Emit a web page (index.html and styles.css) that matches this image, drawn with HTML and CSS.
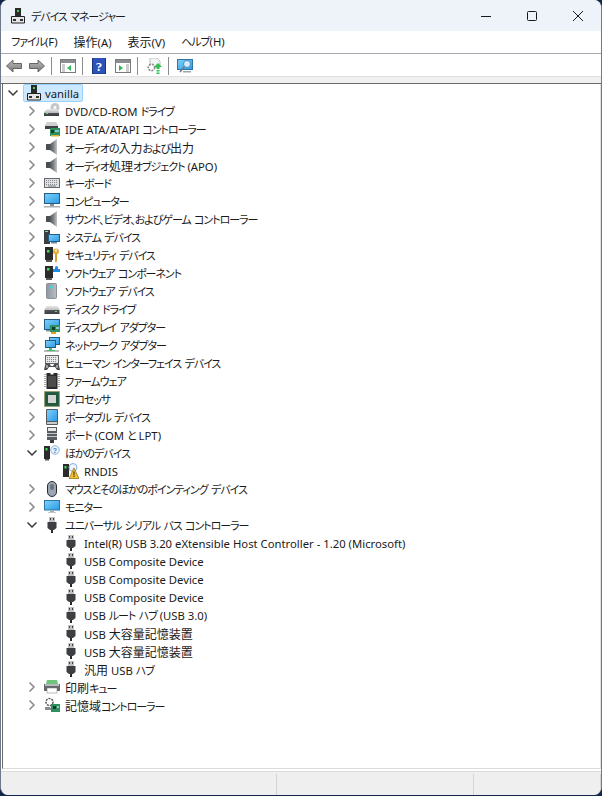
FILE: index.html
```html
<!DOCTYPE html>
<html lang="ja">
<head>
<meta charset="utf-8">
<title>デバイス マネージャー</title>
<link rel="stylesheet" href="styles.css">
</head>
<body>
<svg class="defs" width="0" height="0" aria-hidden="true">
  <defs>
    <linearGradient id="g-scr" x1="0" y1="0" x2="1" y2="1"><stop offset="0" stop-color="#7fd0fa"/><stop offset="1" stop-color="#2a9be6"/></linearGradient>
    <linearGradient id="g-spk" x1="0" y1="0" x2="1" y2="0"><stop offset="0" stop-color="#4f5458"/><stop offset=".5" stop-color="#7d8286"/><stop offset="1" stop-color="#c4c6c8"/></linearGradient>
    <linearGradient id="g-drv" x1="0" y1="0" x2="0" y2="1"><stop offset="0" stop-color="#e8e8e8"/><stop offset=".5" stop-color="#bdbdbd"/><stop offset=".55" stop-color="#50545a"/><stop offset="1" stop-color="#3a3d42"/></linearGradient>
    <linearGradient id="g-twr" x1="0" y1="0" x2="1" y2="0"><stop offset="0" stop-color="#8f969e"/><stop offset="1" stop-color="#b9bec4"/></linearGradient>
    <linearGradient id="g-arr" x1="0" y1="0" x2="0" y2="1"><stop offset="0" stop-color="#bcbcbc"/><stop offset="1" stop-color="#787878"/></linearGradient>

    <symbol id="i-pc" viewBox="0 0 16 16"><rect x="5" y="0" width="6" height="8" fill="#2b2b2b"/><rect x="7" y="2" width="2" height="2" fill="#3fd25a"/><path d="M1.500 8.500h13v6.500h-13z" fill="#e6e6e6" stroke="#222"/><rect x="3" y="11" width="3" height="2" fill="#333"/><rect x="10" y="11" width="3" height="2" fill="#333"/></symbol>

    <symbol id="i-dvd" viewBox="0 0 16 16"><circle cx="11" cy="4.500" r="4.500" fill="#c4c7ca"/><circle cx="11" cy="4.500" r="1.400" fill="#fff"/><path d="M3 6h10l2 3v4H0v-4z" fill="url(#g-drv)"/><rect x="2" y="10" width="2" height="1" fill="#5fe06a"/></symbol>

    <symbol id="i-ide" viewBox="0 0 16 16"><path d="M3 1h9l2 3v3H1V4z" fill="#cfcfcf"/><rect x="1" y="5" width="13" height="3" fill="#3e4146"/><rect x="6" y="7" width="10" height="8" fill="#2f8f5f"/><rect x="7" y="9" width="3" height="3" fill="#123e2a"/><rect x="11" y="9" width="4" height="2" fill="#7cc"/><path d="M7 14h8v1.500H7z" fill="#d8b23a"/></symbol>

    <symbol id="i-audio" viewBox="0 0 16 16"><rect x="2" y="5" width="4" height="6" fill="#4a4e52"/><path d="M6 5 13 0v16L6 11z" fill="url(#g-spk)"/></symbol>

    <symbol id="i-kbd" viewBox="0 0 16 16"><rect x=".5" y="3.500" width="15" height="9" fill="#dfe1e4" stroke="#666a6f"/><path d="M2 5.500h12M2 7.500h12M2 9.500h12" stroke="#888d92" stroke-dasharray="1 1"/><path d="M4 11h8" stroke="#7a7f84"/></symbol>

    <symbol id="i-mon" viewBox="0 0 16 16"><rect x=".5" y=".5" width="15" height="10" fill="url(#g-scr)" stroke="#245c86"/><rect x="6" y="11" width="4" height="2" fill="#8a9299"/><rect y="13" width="16" height="1.500" fill="#aab0b5"/></symbol>

    <symbol id="i-sys" viewBox="0 0 16 16"><rect x="0" y="1" width="6" height="14" fill="#3c3f42"/><rect x="1" y="2" width="3" height="1" fill="#7fe08a"/><rect x="4.500" y="5.500" width="11" height="7" fill="url(#g-scr)" stroke="#245c86"/><rect x="7" y="13" width="6" height="1.500" fill="#6d8aa0"/></symbol>

    <symbol id="i-sec" viewBox="0 0 16 16"><rect x="1" y="0" width="8" height="13" fill="#2b2b2b"/><rect x="3" y="3" width="2.500" height="2.500" fill="#43dc5c"/><path d="M2 13h6v2H2z" fill="#555"/><circle cx="12" cy="4.500" r="3" fill="#e0b040"/><circle cx="12" cy="3.500" r=".9" fill="#fff"/><path d="M11 7h2v7l-1 1.500-1-1z" fill="#d2a030"/></symbol>

    <symbol id="i-comp" viewBox="0 0 16 16"><rect x="1" y="1" width="8" height="12" fill="#2b2b2b"/><rect x="3" y="3" width="2.500" height="2.500" fill="#43dc5c"/><rect x="2" y="13" width="6" height="2" fill="#555"/><path d="M9 4h2V2.500a1.500 1.500 0 0 1 3 0V4h2v3H9z" fill="#1f8ee0"/></symbol>

    <symbol id="i-swdev" viewBox="0 0 16 16"><rect x="2.500" y=".5" width="10" height="15" rx="1" fill="url(#g-twr)" stroke="#8a9098"/><rect x="6" y="3" width="2.500" height="2.500" fill="#35d8e8"/></symbol>

    <symbol id="i-disk" viewBox="0 0 16 16"><path d="M3 5h10l2.500 3v5H.5V8z" fill="url(#g-drv)"/><rect x="11" y="10" width="2" height="1" fill="#6fe06a"/></symbol>

    <symbol id="i-disp" viewBox="0 0 16 16"><rect x=".5" y=".5" width="15" height="10" fill="url(#g-scr)" stroke="#245c86"/><rect x="2" y="11" width="6" height="1.500" fill="#8a9299"/><rect x="6" y="6" width="10" height="7" fill="#2f8f5f"/><rect x="8" y="8" width="3" height="3" fill="#123e2a"/><rect x="12" y="8" width="3" height="2" fill="#8cd"/><rect x="7" y="13" width="5" height="2" fill="#e0a020"/></symbol>

    <symbol id="i-net" viewBox="0 0 16 16"><rect x="5.500" y=".5" width="10" height="7" fill="url(#g-scr)" stroke="#245c86"/><rect x="1.500" y="3.500" width="10" height="7" fill="url(#g-scr)" stroke="#245c86"/><rect x="5" y="11" width="3" height="2" fill="#45c060"/><rect x="0" y="13" width="15" height="2" fill="#b8bcc0"/><rect x="3" y="13" width="8" height="1" fill="#45c060"/></symbol>

    <symbol id="i-hid" viewBox="0 0 16 16"><rect x="1.500" y=".5" width="13" height="8" fill="#e6e8ea" stroke="#666"/><path d="M3 2.500h10M3 4.500h10M3 6.500h10" stroke="#888" stroke-dasharray="1 1"/><path d="M0 15 1.500 8.500h4L7 11h2l1.500-2.500h4L16 15h-3l-2-3H5l-2 3z" fill="#4a4d52"/><rect x="2" y="10" width="2" height="3" fill="#9aa0a6"/><rect x="12" y="10" width="2" height="3" fill="#9aa0a6"/></symbol>

    <symbol id="i-fw" viewBox="0 0 16 16"><path d="M2.500 0h4v1.500h3V0h4v16h-11z" fill="#2a2a2a"/><rect x="4" y="3" width="8" height="11" fill="#4c4c4c"/><path d="M1 1v14M15 1v14" stroke="#555" stroke-dasharray="1 1"/></symbol>

    <symbol id="i-cpu" viewBox="0 0 16 16"><rect x=".5" y=".5" width="15" height="15" fill="#2c6a4c" stroke="#9c8a40" stroke-dasharray="1 1"/><rect x="1.500" y="1.500" width="13" height="13" fill="#23583e"/><rect x="4" y="4" width="8" height="8" fill="#d4d6d4"/></symbol>

    <symbol id="i-port2" viewBox="0 0 16 16"><rect x="3" y="0" width="10" height="13" fill="#585b60"/><rect x="4" y="1" width="8" height="3" fill="#e8e8e8"/><path d="M3 6.500h10M3 9.500h10" stroke="#c4c6c8"/><rect x="6" y="13" width="4" height="3" fill="#3a3c40"/></symbol>

    <symbol id="i-portable" viewBox="0 0 16 16"><rect x="2" y="0" width="12" height="16" rx="1" fill="#55585c"/><rect x="3" y="1" width="10" height="11" fill="url(#g-scr)"/><rect x="3" y="13" width="10" height="2" fill="#c8cbce"/></symbol>

    <symbol id="i-other" viewBox="0 0 16 16"><rect x="0" y="1" width="6" height="13" fill="#2b2b2b"/><rect x="1.500" y="3" width="2" height="2.500" fill="#43dc5c"/><rect x="1" y="14" width="4" height="1.500" fill="#555"/><circle cx="11" cy="5" r="4.200" fill="#eef4fb" stroke="#8ab4dc"/><text class="qm" x="11" y="7.500" text-anchor="middle">?</text></symbol>

    <symbol id="i-rndis" viewBox="0 0 16 16"><rect x="0" y="1" width="6" height="13" fill="#2b2b2b"/><rect x="1.500" y="3" width="2" height="2.500" fill="#43dc5c"/><circle cx="10" cy="4.500" r="4" fill="#eef4fb" stroke="#8ab4dc"/><path d="M11 5 16 15.500H6z" fill="#f2c230" stroke="#8a6a10" stroke-width=".7"/><rect x="10.500" y="8.500" width="1" height="4" fill="#222"/><rect x="10.500" y="13" width="1" height="1" fill="#222"/></symbol>

    <symbol id="i-mouse" viewBox="0 0 16 16"><rect x="3.500" y=".5" width="9" height="15" rx="4.500" fill="#9aa6b4" stroke="#2a2c30"/><rect x="6" y="3" width="4" height="6" rx="2" fill="#6a7480"/></symbol>

    <symbol id="i-mon2" viewBox="0 0 16 16"><rect x=".5" y="1.500" width="15" height="9.500" fill="url(#g-scr)" stroke="#2a76a8"/><rect x="6" y="11.500" width="4" height="1.500" fill="#a8b0b6"/><rect x="4" y="13" width="8" height="1" fill="#c4c8cc"/></symbol>

    <symbol id="i-usb" viewBox="0 0 16 16"><rect x="5" y="0" width="6" height="5" fill="#c0c0c0"/><rect x="6" y="1" width="1" height="2" fill="#444"/><rect x="9" y="1" width="1" height="2" fill="#444"/><path d="M3.500 5h9v6l-2.500 2H6l-2.500-2z" fill="#3d3f42"/><rect x="7" y="13" width="2" height="3" fill="#2a2a2a"/></symbol>

    <symbol id="i-prn" viewBox="0 0 16 16"><path d="M3 1h10l1 4H2z" fill="#6ec47a"/><path d="M0 5h16v7H0z" fill="#65686c"/><path d="M1 5h14v2H1z" fill="#b8babc"/><rect x="3" y="9" width="10" height="5" fill="#fff" stroke="#777" stroke-width=".5"/></symbol>

    <symbol id="i-stor" viewBox="0 0 16 16"><circle cx="5.500" cy="5" r="3.500" fill="#fff" stroke="#555" stroke-width="1.500" stroke-dasharray="2 1"/><path d="M1 10h5l2 3H1z" fill="#8a8d90"/><rect x="7" y="7" width="9" height="8" fill="#2f8f5f"/><rect x="9" y="9" width="3" height="3" fill="#123e2a"/><rect x="13" y="9" width="2" height="2" fill="#8cd"/></symbol>

    <symbol id="i-right" viewBox="0 0 10 10"><path d="M2.500 .5 7 5 2.500 9.500" fill="none" stroke="#8a8a8a" stroke-width="1.500"/></symbol>
    <symbol id="i-down" viewBox="0 0 10 10"><path d="M.5 2.500 5 7l4.500-4.500" fill="none" stroke="#3a3a3a" stroke-width="1.500"/></symbol>
  </defs>
</svg>

<div class="window">
  <header class="titlebar">
    <svg class="ico title-ico"><use href="#i-pc"/></svg>
    <span class="title"><span class="ja">デバイス マネージャー</span></span>
    <div class="controls">
      <svg class="ctl" viewBox="0 0 12 12"><path d="M1 6.500h10" stroke="#1a1a1a" fill="none"/></svg>
      <svg class="ctl" viewBox="0 0 12 12"><rect x="1.500" y="1.500" width="9" height="9" rx="1" fill="none" stroke="#1a1a1a"/></svg>
      <svg class="ctl" viewBox="0 0 12 12"><path d="M1 1l10 10M11 1 1 11" stroke="#1a1a1a" fill="none"/></svg>
    </div>
  </header>

  <nav class="menubar">
    <span><span class="ja">ファイル</span>(F)</span><span><span class="kj">操作</span>(A)</span><span><span class="kj">表示</span>(V)</span><span><span class="ja">ヘルプ</span>(H)</span>
  </nav>

  <div class="toolbar">
    <svg class="tb" viewBox="0 0 16 16"><path d="M.5 8 7 2v3.500h8.500v5H7V14z" fill="url(#g-arr)" stroke="#666"/></svg>
    <svg class="tb tb-fwd" viewBox="0 0 16 16"><path d="M15.500 8 9 2v3.500H.5v5H9V14z" fill="url(#g-arr)" stroke="#666"/></svg>
    <i class="sep"></i>
    <svg class="tb" viewBox="0 0 16 16"><rect x=".5" y="1.500" width="15" height="13" fill="#fff" stroke="#7a7a7a"/><rect x="1" y="2" width="14" height="3" fill="#8a8e92"/><path d="M2 7h3M2 9h3M2 11h3M2 13h3" stroke="#9a9a9a"/><path d="M11 7v6L7 10z" fill="#32b85a"/></svg>
    <i class="sep"></i>
    <svg class="tb" viewBox="0 0 16 16"><rect x="1.500" y="-.5" width="13" height="16.500" fill="#2c53b8" stroke="#1c3580"/><text class="help-q" x="8" y="13" text-anchor="middle">?</text></svg>
    <svg class="tb tb-next" viewBox="0 0 16 16"><rect x=".5" y="1.500" width="15" height="13" fill="#fff" stroke="#7a7a7a"/><rect x="1" y="2" width="14" height="3" fill="#8a8e92"/><path d="M11 7h3M11 9h3M11 11h3M11 13h3" stroke="#9a9a9a"/><path d="M4 7v6l4-3z" fill="#32b85a"/></svg>
    <i class="sep"></i>
    <svg class="tb" viewBox="0 0 16 16"><path d="M4 0h7l3 3v6H4z" fill="#f4f4f4" stroke="#c0c0c0"/><circle cx="5.500" cy="9.500" r="3.200" fill="#fff" stroke="#8a8a8a" stroke-width="1.600" stroke-dasharray="2 1"/><path d="M12 5l4 4h-2.500v2h-3V9H8z" fill="#2fc04f"/><rect x="10.500" y="12" width="3" height="1.500" fill="#2fc04f"/><rect x="10.500" y="14.500" width="3" height="1.500" fill="#2fc04f"/></svg>
    <i class="sep"></i>
    <svg class="tb" viewBox="0 0 16 16"><rect x=".5" y="1.500" width="15" height="10" fill="url(#g-scr)" stroke="#2a76a8"/><circle cx="10" cy="6" r="3.500" fill="#cfeeff" stroke="#4e8fb8"/><path d="M7.500 8.500 3 14" stroke="#6a7a86" stroke-width="1.500"/><rect x="6" y="13" width="8" height="1.500" fill="#9aa6b0"/></svg>
  </div>

  <div class="strip"></div>

  <main class="tree">
    <div class="row lv0"><svg class="tw"><use href="#i-down"/></svg><span class="root"><svg class="ico"><use href="#i-pc"/></svg><b class="lbl">vanilla</b></span></div>
    <div class="row lv1"><svg class="tw"><use href="#i-right"/></svg><svg class="ico"><use href="#i-dvd"/></svg><span>DVD/CD-ROM <span class="ja">ドライブ</span></span></div>
    <div class="row lv1"><svg class="tw"><use href="#i-right"/></svg><svg class="ico"><use href="#i-ide"/></svg><span>IDE ATA/ATAPI <span class="ja">コントローラー</span></span></div>
    <div class="row lv1"><svg class="tw"><use href="#i-right"/></svg><svg class="ico"><use href="#i-audio"/></svg><span><span class="ja">オーディオの</span><span class="kj">入力</span><span class="ja">および</span><span class="kj">出力</span></span></div>
    <div class="row lv1"><svg class="tw"><use href="#i-right"/></svg><svg class="ico"><use href="#i-audio"/></svg><span><span class="ja">オーディオ</span><span class="kj">処理</span><span class="ja">オブジェクト</span> (APO)</span></div>
    <div class="row lv1"><svg class="tw"><use href="#i-right"/></svg><svg class="ico"><use href="#i-kbd"/></svg><span class="ja">キーボード</span></div>
    <div class="row lv1"><svg class="tw"><use href="#i-right"/></svg><svg class="ico"><use href="#i-mon"/></svg><span class="ja">コンピューター</span></div>
    <div class="row lv1"><svg class="tw"><use href="#i-right"/></svg><svg class="ico"><use href="#i-audio"/></svg><span class="ja">サウンド、ビデオ、およびゲーム コントローラー</span></div>
    <div class="row lv1"><svg class="tw"><use href="#i-right"/></svg><svg class="ico"><use href="#i-sys"/></svg><span class="ja">システム デバイス</span></div>
    <div class="row lv1"><svg class="tw"><use href="#i-right"/></svg><svg class="ico"><use href="#i-sec"/></svg><span class="ja">セキュリティ デバイス</span></div>
    <div class="row lv1"><svg class="tw"><use href="#i-right"/></svg><svg class="ico"><use href="#i-comp"/></svg><span class="ja">ソフトウェア コンポーネント</span></div>
    <div class="row lv1"><svg class="tw"><use href="#i-right"/></svg><svg class="ico"><use href="#i-swdev"/></svg><span class="ja">ソフトウェア デバイス</span></div>
    <div class="row lv1"><svg class="tw"><use href="#i-right"/></svg><svg class="ico"><use href="#i-disk"/></svg><span class="ja">ディスク ドライブ</span></div>
    <div class="row lv1"><svg class="tw"><use href="#i-right"/></svg><svg class="ico"><use href="#i-disp"/></svg><span class="ja">ディスプレイ アダプター</span></div>
    <div class="row lv1"><svg class="tw"><use href="#i-right"/></svg><svg class="ico"><use href="#i-net"/></svg><span class="ja">ネットワーク アダプター</span></div>
    <div class="row lv1"><svg class="tw"><use href="#i-right"/></svg><svg class="ico"><use href="#i-hid"/></svg><span class="ja">ヒューマン インターフェイス デバイス</span></div>
    <div class="row lv1"><svg class="tw"><use href="#i-right"/></svg><svg class="ico"><use href="#i-fw"/></svg><span class="ja">ファームウェア</span></div>
    <div class="row lv1"><svg class="tw"><use href="#i-right"/></svg><svg class="ico"><use href="#i-cpu"/></svg><span class="ja">プロセッサ</span></div>
    <div class="row lv1"><svg class="tw"><use href="#i-right"/></svg><svg class="ico"><use href="#i-portable"/></svg><span class="ja">ポータブル デバイス</span></div>
    <div class="row lv1"><svg class="tw"><use href="#i-right"/></svg><svg class="ico"><use href="#i-port2"/></svg><span><span class="ja">ポート</span> (COM <span class="ja">と</span> LPT)</span></div>
    <div class="row lv1"><svg class="tw"><use href="#i-down"/></svg><svg class="ico"><use href="#i-other"/></svg><span class="ja">ほかのデバイス</span></div>
    <div class="row lv2"><svg class="ico"><use href="#i-rndis"/></svg><span>RNDIS</span></div>
    <div class="row lv1"><svg class="tw"><use href="#i-right"/></svg><svg class="ico"><use href="#i-mouse"/></svg><span class="ja">マウスとそのほかのポインティング デバイス</span></div>
    <div class="row lv1"><svg class="tw"><use href="#i-right"/></svg><svg class="ico"><use href="#i-mon2"/></svg><span class="ja">モニター</span></div>
    <div class="row lv1"><svg class="tw"><use href="#i-down"/></svg><svg class="ico"><use href="#i-usb"/></svg><span class="ja">ユニバーサル シリアル バス コントローラー</span></div>
    <div class="row lv2"><svg class="ico"><use href="#i-usb"/></svg><span>Intel(R) USB 3.20 eXtensible Host Controller - 1.20 (Microsoft)</span></div>
    <div class="row lv2"><svg class="ico"><use href="#i-usb"/></svg><span>USB Composite Device</span></div>
    <div class="row lv2"><svg class="ico"><use href="#i-usb"/></svg><span>USB Composite Device</span></div>
    <div class="row lv2"><svg class="ico"><use href="#i-usb"/></svg><span>USB Composite Device</span></div>
    <div class="row lv2"><svg class="ico"><use href="#i-usb"/></svg><span>USB <span class="ja">ルート ハブ</span> (USB 3.0)</span></div>
    <div class="row lv2"><svg class="ico"><use href="#i-usb"/></svg><span>USB <span class="kj">大容量記憶装置</span></span></div>
    <div class="row lv2"><svg class="ico"><use href="#i-usb"/></svg><span>USB <span class="kj">大容量記憶装置</span></span></div>
    <div class="row lv2"><svg class="ico"><use href="#i-usb"/></svg><span><span class="kj">汎用</span> USB <span class="ja">ハブ</span></span></div>
    <div class="row lv1"><svg class="tw"><use href="#i-right"/></svg><svg class="ico"><use href="#i-prn"/></svg><span><span class="kj">印刷</span><span class="ja">キュー</span></span></div>
    <div class="row lv1"><svg class="tw"><use href="#i-right"/></svg><svg class="ico"><use href="#i-stor"/></svg><span><span class="kj">記憶域</span><span class="ja">コントローラー</span></span></div>
  </main>

  <footer class="status">
    <div class="cell c1"></div><div class="cell c2"></div><div class="cell c3"></div>
  </footer>
</div>
</body>
</html>
```

FILE: styles.css
```css
* { box-sizing: border-box; }
html, body { margin: 0; height: 100%; }
body {
  background: #14254a;
  overflow: hidden;
  font-family: "Noto Sans", "Noto Sans CJK JP", sans-serif;
  font-size: 11.3px;
  color: #1a1a1a;
}
.ja {
  font-family: "Noto Sans CJK JP", sans-serif;
  font-feature-settings: "palt";
  font-size: 11px;
  letter-spacing: -1.05px;
  word-spacing: 2px;
}
.kj {
  font-family: "Noto Sans CJK JP", sans-serif;
  font-size: 12px;
}
.defs { position: absolute; }
.window {
  width: 602px;
  height: 795px;
  display: flex;
  flex-direction: column;
  background: #fff;
  border-radius: 8px;
  border-left: 1px solid #6e7a8a;
  border-right: 1px solid #6e7a8a;
  overflow: hidden;
}
.titlebar {
  height: 31px;
  flex: none;
  display: flex;
  align-items: center;
  padding-left: 9px;
  background: #eef3f9;
}
.title-ico { margin-right: 5px; }
.controls { margin-left: auto; display: flex; }
.ctl { width: 46px; height: 12px; flex: none; }
.menubar {
  height: 23px;
  flex: none;
  display: flex;
  align-items: center;
  gap: 16px;
  padding: 0 0 2px 10px;
  background: #fff;
  border-bottom: 1px solid #a9a9b2;
}
.toolbar {
  height: 22px;
  flex: none;
  display: flex;
  align-items: center;
  padding: 2px 0 0 5px;
  background: #fff;
}
.tb { width: 16px; height: 16px; flex: none; }
.tb-fwd { margin-left: 7px; }
.tb-next { margin-left: 8px; }
.sep { width: 1px; height: 18px; background: #8c8c8c; flex: none; margin: 0 8px 0 6px; }
.help-q { font: bold 13px "Liberation Serif", serif; fill: #fff; }
.qm { font: bold 7px "Liberation Sans", sans-serif; fill: #3a78c0; }
.strip {
  height: 8px;
  flex: none;
  background: #f0f0f0;
  border-top: 1px solid #e0e0e0;
  border-bottom: 1px solid #6a6a6a;
}
.tree {
  flex: 1;
  min-height: 0;
  margin-left: 1px;
  border-left: 1px solid #6a6a6a;
  border-right: 1px solid #e0e0e0;
  border-bottom: 1px solid #dcdcdc;
  background: #fff;
}
.row { height: 18px; display: flex; align-items: center; white-space: nowrap; }
.ico { width: 16px; height: 16px; flex: none; }
.tw { width: 10px; height: 10px; flex: none; }
.lv0 { padding-left: 5px; }
.lv0 .tw { margin-right: 5px; }
.root {
  display: flex;
  align-items: center;
  width: 60px;
  height: 18px;
  padding-left: 2px;
  background: #cce8ff;
  border: 1px solid #99d1ff;
  border-radius: 2px;
}
.lbl { font-weight: 400; margin-left: 3px; }
.lv1 { padding-left: 24px; }
.lv1 .tw { margin-right: 7px; }
.lv1 .ico { margin-right: 5px; }
.lv2 { padding-left: 60px; }
.lv2 .ico { margin-right: 5px; }
.status {
  height: 24px;
  flex: none;
  margin-top: 2px;
  display: flex;
  background: #efefef;
  border-top: 1px solid #dcdcdc;
  border-radius: 0 0 8px 8px;
  padding-top: 2px;
}
.cell { border-right: 1px solid #d4d4d4; }
.c1 { width: 276px; }
.c2 { width: 197px; }
.c3 { flex: 1; }
```
